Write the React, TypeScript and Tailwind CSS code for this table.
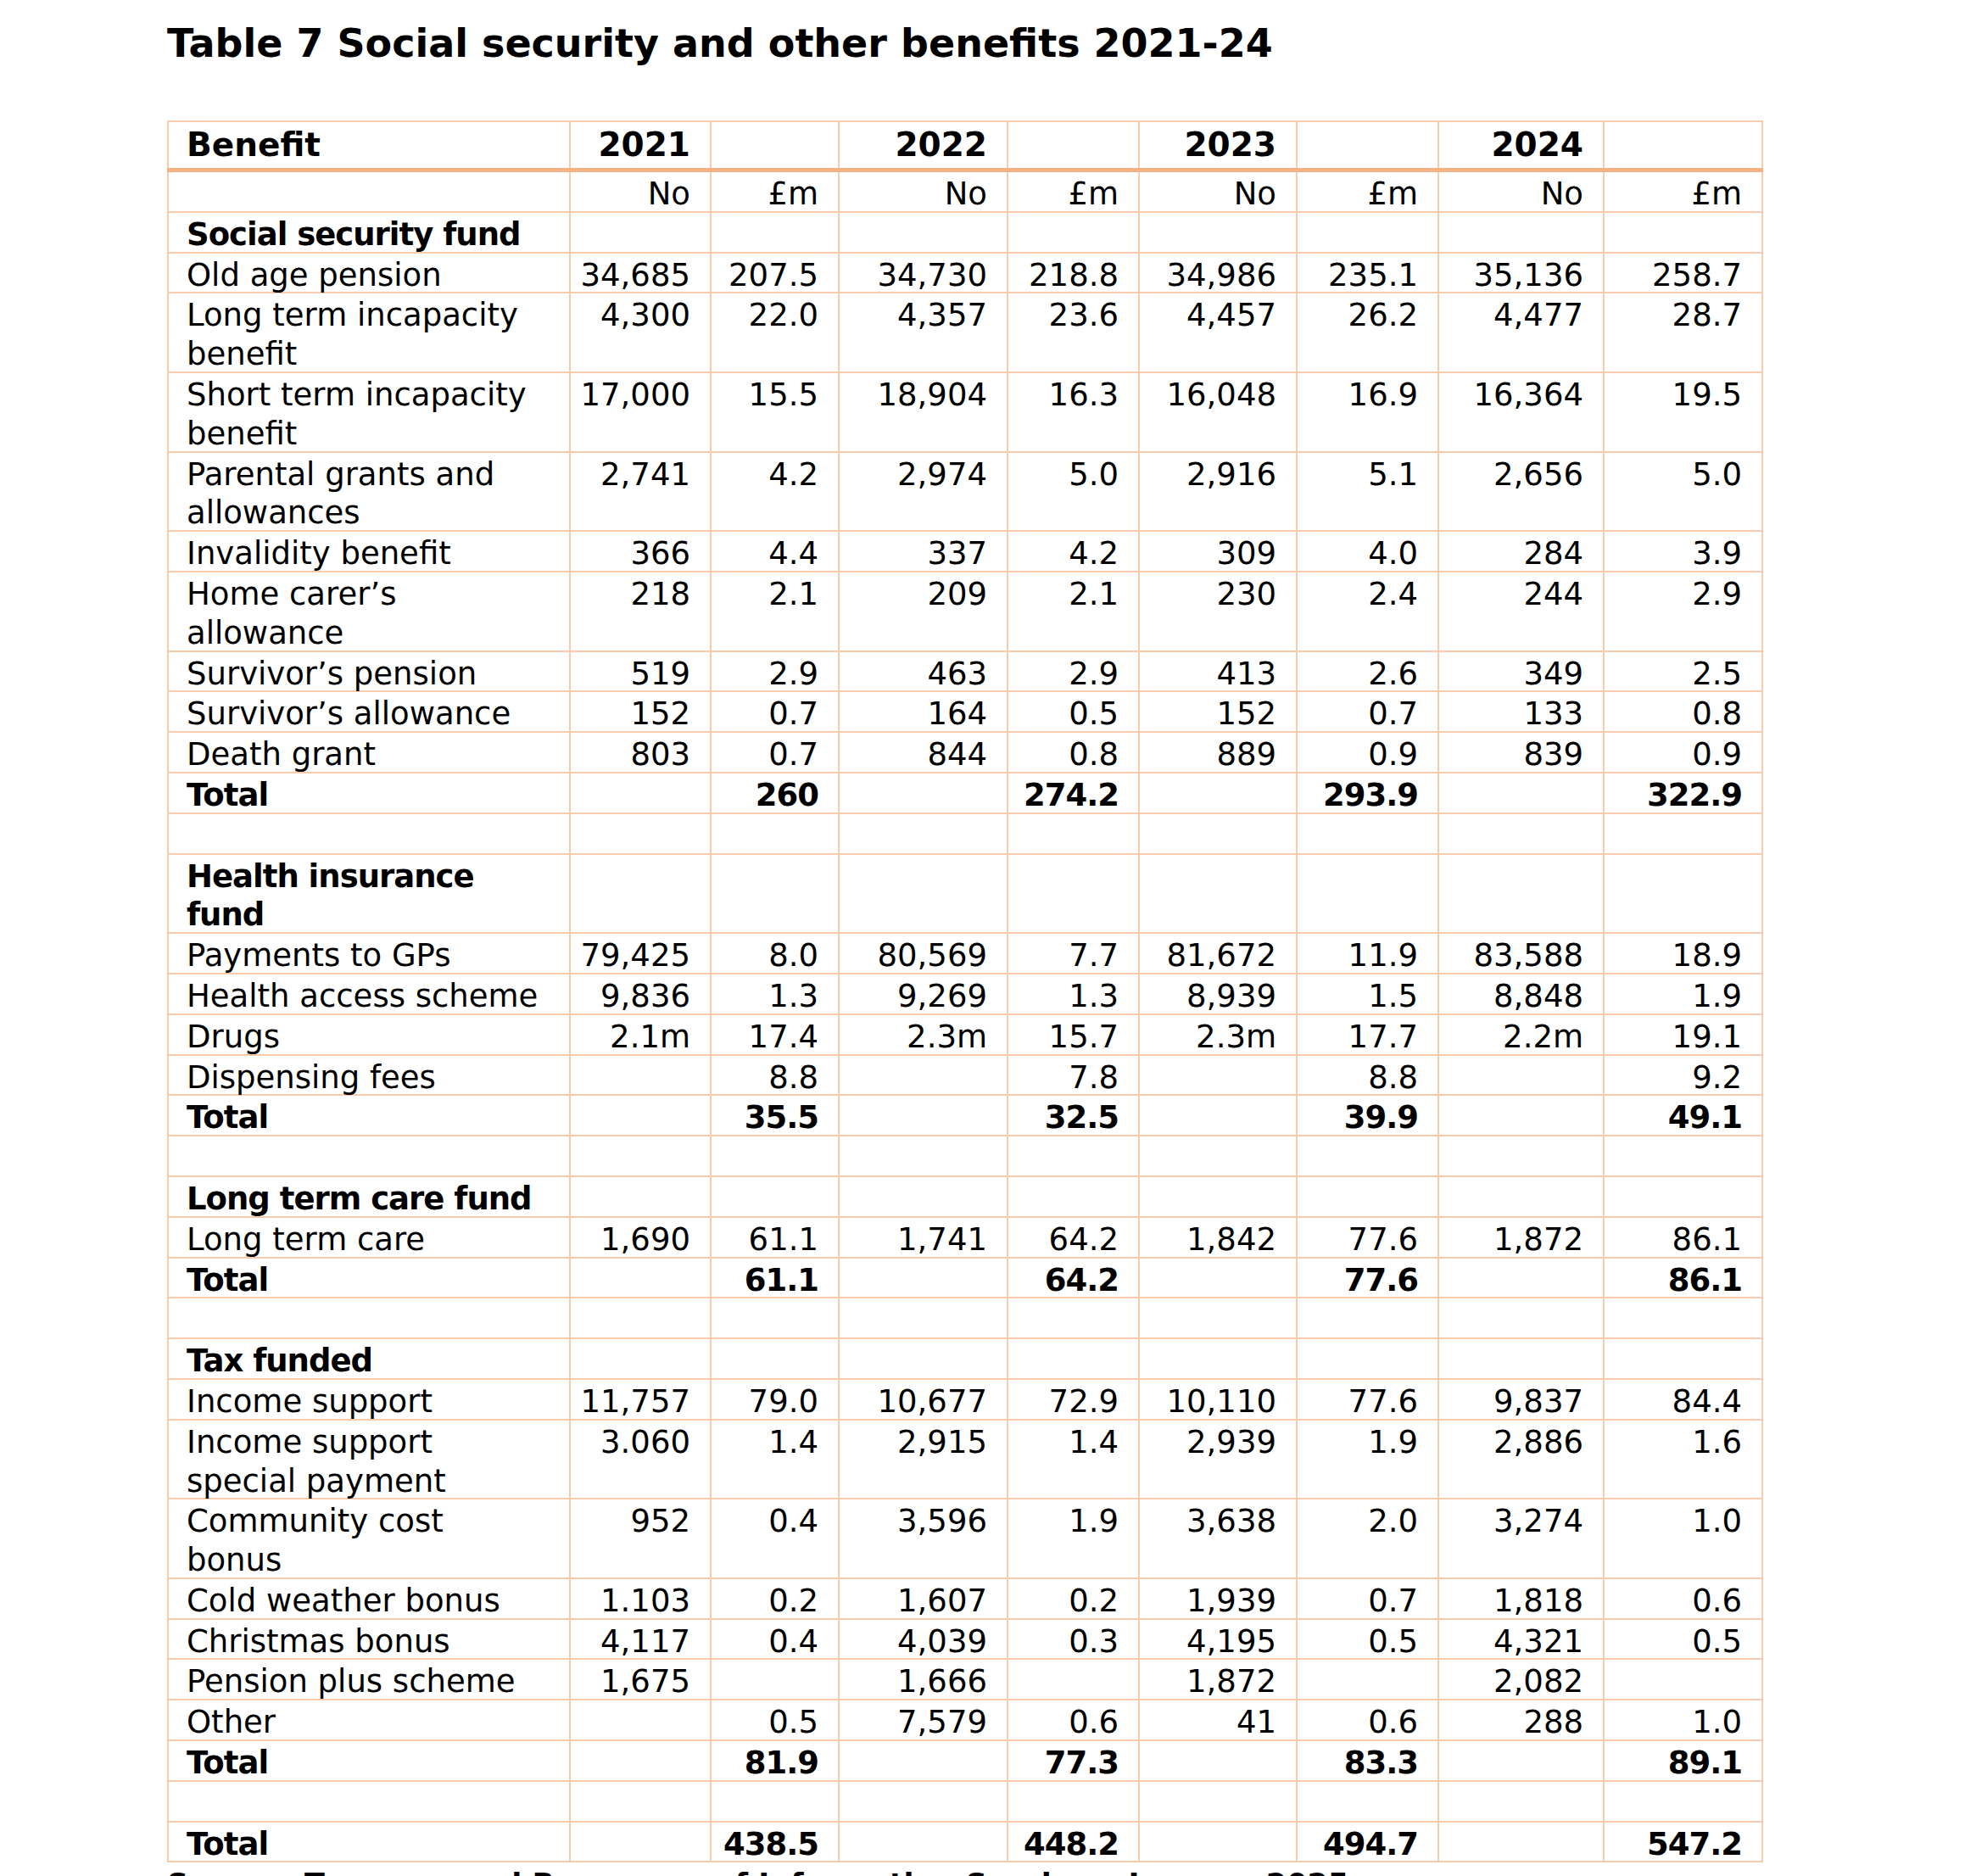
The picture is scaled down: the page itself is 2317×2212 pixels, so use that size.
import React from 'react';

type Row = {
  kind: 'section' | 'item' | 'total' | 'blank';
  label?: string[];
  vals?: string[];
};

const e = '';

const rows: Row[] = [
  { kind: 'section', label: ['Social security fund'] },
  { kind: 'item', label: ['Old age pension'], vals: ['34,685', '207.5', '34,730', '218.8', '34,986', '235.1', '35,136', '258.7'] },
  { kind: 'item', label: ['Long term incapacity', 'benefit'], vals: ['4,300', '22.0', '4,357', '23.6', '4,457', '26.2', '4,477', '28.7'] },
  { kind: 'item', label: ['Short term incapacity', 'benefit'], vals: ['17,000', '15.5', '18,904', '16.3', '16,048', '16.9', '16,364', '19.5'] },
  { kind: 'item', label: ['Parental grants and', 'allowances'], vals: ['2,741', '4.2', '2,974', '5.0', '2,916', '5.1', '2,656', '5.0'] },
  { kind: 'item', label: ['Invalidity benefit'], vals: ['366', '4.4', '337', '4.2', '309', '4.0', '284', '3.9'] },
  { kind: 'item', label: ['Home carer’s', 'allowance'], vals: ['218', '2.1', '209', '2.1', '230', '2.4', '244', '2.9'] },
  { kind: 'item', label: ['Survivor’s pension'], vals: ['519', '2.9', '463', '2.9', '413', '2.6', '349', '2.5'] },
  { kind: 'item', label: ['Survivor’s allowance'], vals: ['152', '0.7', '164', '0.5', '152', '0.7', '133', '0.8'] },
  { kind: 'item', label: ['Death grant'], vals: ['803', '0.7', '844', '0.8', '889', '0.9', '839', '0.9'] },
  { kind: 'total', label: ['Total'], vals: [e, '260', e, '274.2', e, '293.9', e, '322.9'] },
  { kind: 'blank' },
  { kind: 'section', label: ['Health insurance', 'fund'] },
  { kind: 'item', label: ['Payments to GPs'], vals: ['79,425', '8.0', '80,569', '7.7', '81,672', '11.9', '83,588', '18.9'] },
  { kind: 'item', label: ['Health access scheme'], vals: ['9,836', '1.3', '9,269', '1.3', '8,939', '1.5', '8,848', '1.9'] },
  { kind: 'item', label: ['Drugs'], vals: ['2.1m', '17.4', '2.3m', '15.7', '2.3m', '17.7', '2.2m', '19.1'] },
  { kind: 'item', label: ['Dispensing fees'], vals: [e, '8.8', e, '7.8', e, '8.8', e, '9.2'] },
  { kind: 'total', label: ['Total'], vals: [e, '35.5', e, '32.5', e, '39.9', e, '49.1'] },
  { kind: 'blank' },
  { kind: 'section', label: ['Long term care fund'] },
  { kind: 'item', label: ['Long term care'], vals: ['1,690', '61.1', '1,741', '64.2', '1,842', '77.6', '1,872', '86.1'] },
  { kind: 'total', label: ['Total'], vals: [e, '61.1', e, '64.2', e, '77.6', e, '86.1'] },
  { kind: 'blank' },
  { kind: 'section', label: ['Tax funded'] },
  { kind: 'item', label: ['Income support'], vals: ['11,757', '79.0', '10,677', '72.9', '10,110', '77.6', '9,837', '84.4'] },
  { kind: 'item', label: ['Income support', 'special payment'], vals: ['3.060', '1.4', '2,915', '1.4', '2,939', '1.9', '2,886', '1.6'] },
  { kind: 'item', label: ['Community cost', 'bonus'], vals: ['952', '0.4', '3,596', '1.9', '3,638', '2.0', '3,274', '1.0'] },
  { kind: 'item', label: ['Cold weather bonus'], vals: ['1.103', '0.2', '1,607', '0.2', '1,939', '0.7', '1,818', '0.6'] },
  { kind: 'item', label: ['Christmas bonus'], vals: ['4,117', '0.4', '4,039', '0.3', '4,195', '0.5', '4,321', '0.5'] },
  { kind: 'item', label: ['Pension plus scheme'], vals: ['1,675', e, '1,666', e, '1,872', e, '2,082', e] },
  { kind: 'item', label: ['Other'], vals: [e, '0.5', '7,579', '0.6', '41', '0.6', '288', '1.0'] },
  { kind: 'total', label: ['Total'], vals: [e, '81.9', e, '77.3', e, '83.3', e, '89.1'] },
  { kind: 'blank' },
  { kind: 'total', label: ['Total'], vals: [e, '438.5', e, '448.2', e, '494.7', e, '547.2'] },
];

const colWidths = ['w-[474px]', 'w-[166px]', 'w-[151px]', 'w-[199px]', 'w-[155px]', 'w-[186px]', 'w-[167px]', 'w-[195px]', 'w-[187px]'];
const years = ['2021', '2022', '2023', '2024'];

const cell = 'border-2 border-[#f8cbad] align-top p-0';
const labelCell = `${cell} pl-[21px] text-left whitespace-nowrap`;
const numCell = `${cell} pr-[23px] text-right whitespace-nowrap`;
const headCell = 'border-b-[5px] border-b-[#f4b183]';

// nudges body text down a little inside the fixed line box
const Txt: React.FC<{ children?: React.ReactNode }> = ({ children }) => (
  <div className="translate-y-[3px]">{children}</div>
);

export default function App() {
  return (
    <div className="w-[2317px] h-[2212px] overflow-hidden bg-white pl-[197px] pt-[24px] text-black font-['DejaVu_Sans',sans-serif]">
      <h1 className="text-[46px] leading-[54px] font-bold">
        Table 7 Social security and other benefits 2021-24
      </h1>

      <table className="mt-[64px] w-[1882px] table-fixed border-collapse">
        <colgroup>
          {colWidths.map(w => <col key={w} className={w} />)}
        </colgroup>
        <thead>
          <tr className="text-[39px] leading-[54px] font-bold">
            <th className={`${labelCell} ${headCell}`}>Benefit</th>
            {years.map(y => (
              <React.Fragment key={y}>
                <th className={`${numCell} ${headCell}`}>{y}</th>
                <th className={`${numCell} ${headCell}`} />
              </React.Fragment>
            ))}
          </tr>
        </thead>
        <tbody className="text-[37px] leading-[45.8px]">
          <tr>
            <td className={labelCell}><Txt>{'\u00a0'}</Txt></td>
            {years.map(y => (
              <React.Fragment key={y}>
                <td className={numCell}><Txt>No</Txt></td>
                <td className={numCell}><Txt>£m</Txt></td>
              </React.Fragment>
            ))}
          </tr>
          {rows.map((r, i) => {
            const bold = r.kind === 'section' || r.kind === 'total';
            const track = bold ? 'tracking-[-1px]' : '';
            return (
              <tr key={i} className={bold ? 'font-bold' : ''}>
                <td className={`${labelCell} ${track}`}>
                  <Txt>
                    {r.kind === 'blank'
                      ? '\u00a0'
                      : r.label!.map((l, j) => <div key={j}>{l}</div>)}
                  </Txt>
                </td>
                {Array.from({ length: 8 }).map((_, j) => (
                  <td key={j} className={`${numCell} ${track}`}>
                    <Txt>{r.vals ? r.vals[j] : ''}</Txt>
                  </td>
                ))}
              </tr>
            );
          })}
        </tbody>
      </table>

      <p className="mt-[4px] text-[35px] leading-[45px] font-bold whitespace-nowrap">
        Source: Treasury and Resources of Information Services, January 2025
      </p>
    </div>
  );
}
